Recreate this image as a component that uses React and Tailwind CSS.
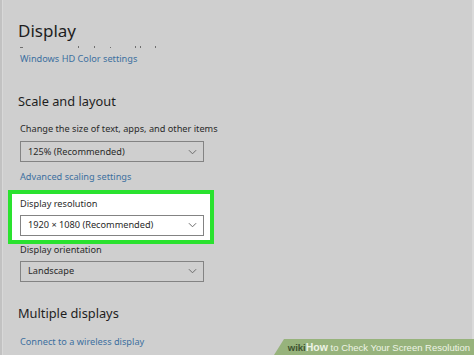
// Windows Settings "Display" page with a highlighted resolution picker

function Chevron() {
  return (
    <svg className="w-[9px] h-[6px]" viewBox="0 0 10 6" fill="none" stroke="#6b6b6b" strokeWidth={1.1}>
      <path d="M1 1l4 4 4-4" />
    </svg>
  )
}

function Select({ value, white = false }) {
  return (
    <div
      className={`w-[184px] h-[21px] border-[1.5px] border-[#838383] flex items-center justify-between pl-[7px] pr-[6px] ${
        white ? 'bg-white' : 'bg-[#cfcfcf]'
      }`}
    >
      <span className="text-[9.2px] text-[#2a2a2a]">{value}</span>
      <Chevron />
    </div>
  )
}

function Label({ children }) {
  return <p className="text-[9.2px] text-[#2a2a2a] leading-none">{children}</p>
}

function Link({ children }) {
  return <p className="text-[9.2px] text-[#3d6f9f] leading-none">{children}</p>
}

export default function App() {
  return (
    <div
      className="relative w-[474px] h-[355px] overflow-hidden bg-[#cfcfcf] flex"
      style={{ fontFamily: '"Noto Sans", "Open Sans", sans-serif' }}
    >
      {/* window edge */}
      <div className="w-[3px] h-full bg-[#c2c2c2] border-r border-[#d8d8d8]" />

      <div className="flex-1 flex flex-col pt-[22px]">
        <h1 className="ml-[15px] text-[17px] leading-none text-[#1e1e1e]">Display</h1>

        {/* clipped line remnants */}
        <div className="ml-[17px] mt-[6px] h-[3px] flex items-end">
          <span className="w-[3px] h-[1px] bg-[#6f6f6f]" />
          <span className="ml-[55px] w-[1px] h-[2px] bg-[#6f6f6f]" />
          <span className="ml-[15px] w-[1px] h-[2px] bg-[#6f6f6f]" />
          <span className="ml-[15px] w-[1px] h-[1px] bg-[#6f6f6f]" />
          <span className="ml-[24px] w-[1px] h-[2px] bg-[#6f6f6f]" />
          <span className="ml-[4px] w-[1px] h-[2px] bg-[#6f6f6f]" />
          <span className="ml-[14px] w-[1px] h-[2px] bg-[#6f6f6f]" />
        </div>

        <div className="ml-[17px] mt-[6px]">
          <Link>Windows HD Color settings</Link>
        </div>

        <h2 className="ml-[15px] mt-[32px] text-[12.8px] leading-none text-[#1e1e1e]">Scale and layout</h2>

        <div className="ml-[17px] mt-[16px]">
          <Label>Change the size of text, apps, and other items</Label>
        </div>
        <div className="ml-[17px] mt-[8px]">
          <Select value="125% (Recommended)" />
        </div>
        <div className="ml-[17px] mt-[10px]">
          <Link>Advanced scaling settings</Link>
        </div>

        {/* highlighted resolution block */}
        <div className="ml-[5px] mt-[9px] w-[206px] border-[4px] border-[#2ae22f] bg-white pl-[8px] pt-[5px] pb-[4px]">
          <Label>Display resolution</Label>
          <div className="mt-[6px]">
            <Select value="1920 × 1080 (Recommended)" white />
          </div>
        </div>

        <div className="ml-[17px] mt-[1px]">
          <Label>Display orientation</Label>
        </div>
        <div className="ml-[17px] mt-[7px]">
          <Select value="Landscape" />
        </div>

        <h2 className="ml-[15px] mt-[25px] text-[12.8px] leading-none text-[#1e1e1e]">Multiple displays</h2>
        <div className="ml-[17px] mt-[17px]">
          <Link>Connect to a wireless display</Link>
        </div>
      </div>

      {/* right edge */}
      <div className="w-[2px] h-full bg-[#dadada]" />

      {/* wikiHow badge */}
      <div
        className="absolute right-0 bottom-0 w-[200px] h-[16px] bg-[#97b37c] flex items-center justify-end pr-[4px]"
        style={{ clipPath: 'polygon(10px 0, 100% 0, 100% 100%, 0 100%)' }}
      >
        <span
          className="text-[9.5px] font-bold leading-none whitespace-nowrap"
          style={{ fontFamily: '"Liberation Sans", Arial, sans-serif' }}
        >
          <span className="text-[#3f5330]">wiki</span>
          <span className="text-[#eef3e6] text-[10.5px]">How</span>
          <span className="text-[#eef3e6] font-normal"> to Check Your Screen Resolution</span>
        </span>
      </div>
    </div>
  )
}
